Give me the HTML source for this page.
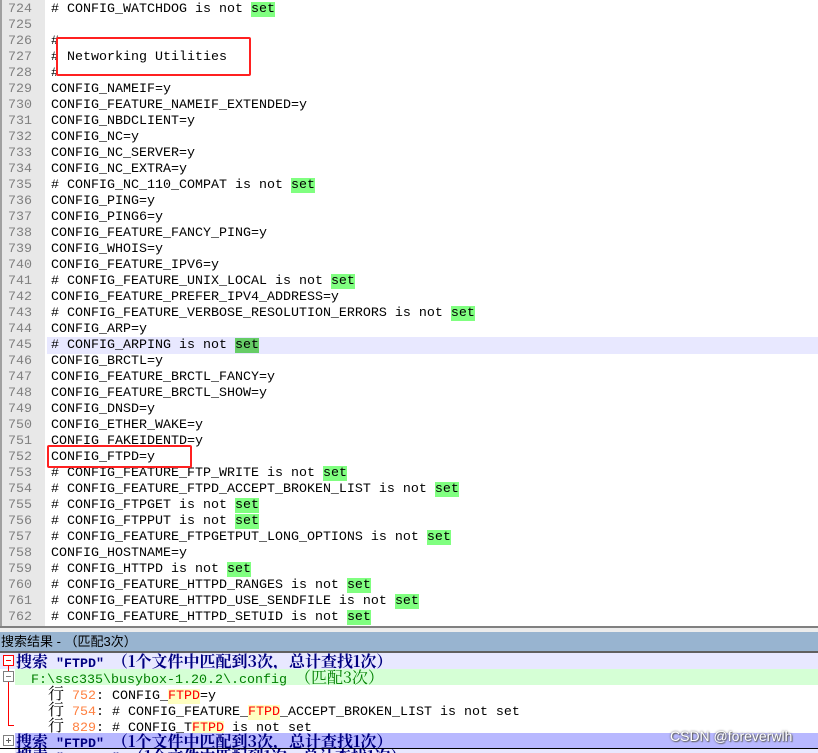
<!DOCTYPE html>
<html><head><meta charset="utf-8"><style>
body{margin:0;width:818px;height:753px;overflow:hidden;background:#fff;position:relative;font-family:"Liberation Mono","Noto Sans CJK SC",monospace;font-size:13.33px;}
.ed{position:absolute;left:0;top:0;width:818px;height:626px;overflow:hidden;}
.gut{position:absolute;left:0;top:0;width:45px;height:626px;background:#e8e8e8;border-left:2px solid #a0a0a0;box-sizing:border-box;}
.r{position:absolute;left:0;width:818px;height:16px;line-height:16px;white-space:pre;}
.n{position:absolute;left:8px;color:#808080;}
.c{position:absolute;left:51px;color:#000;}
.hl{background:#e8e8ff;}
.s{background:#80ff80;}
.hl .s{background:#66cc66;}
.box{position:absolute;border:2px solid #ff2020;box-sizing:border-box;border-radius:2px;}
.p{position:absolute;left:0;width:818px;height:16px;line-height:16px;white-space:pre;}
.b{font-weight:bold;color:#000080;}
.k{font-family:"Noto Serif CJK SC","Noto Sans CJK SC",serif;font-size:16px;}
</style></head><body>
<div class="ed">
<div class="gut"></div>
<div class="r" style="top:2px"><span class="n">724</span><span class="c"># CONFIG_WATCHDOG is not <span class="s">set</span></span></div>
<div class="r" style="top:18px"><span class="n">725</span><span class="c"></span></div>
<div class="r" style="top:34px"><span class="n">726</span><span class="c">#</span></div>
<div class="r" style="top:50px"><span class="n">727</span><span class="c"># Networking Utilities</span></div>
<div class="r" style="top:66px"><span class="n">728</span><span class="c">#</span></div>
<div class="r" style="top:82px"><span class="n">729</span><span class="c">CONFIG_NAMEIF=y</span></div>
<div class="r" style="top:98px"><span class="n">730</span><span class="c">CONFIG_FEATURE_NAMEIF_EXTENDED=y</span></div>
<div class="r" style="top:114px"><span class="n">731</span><span class="c">CONFIG_NBDCLIENT=y</span></div>
<div class="r" style="top:130px"><span class="n">732</span><span class="c">CONFIG_NC=y</span></div>
<div class="r" style="top:146px"><span class="n">733</span><span class="c">CONFIG_NC_SERVER=y</span></div>
<div class="r" style="top:162px"><span class="n">734</span><span class="c">CONFIG_NC_EXTRA=y</span></div>
<div class="r" style="top:178px"><span class="n">735</span><span class="c"># CONFIG_NC_110_COMPAT is not <span class="s">set</span></span></div>
<div class="r" style="top:194px"><span class="n">736</span><span class="c">CONFIG_PING=y</span></div>
<div class="r" style="top:210px"><span class="n">737</span><span class="c">CONFIG_PING6=y</span></div>
<div class="r" style="top:226px"><span class="n">738</span><span class="c">CONFIG_FEATURE_FANCY_PING=y</span></div>
<div class="r" style="top:242px"><span class="n">739</span><span class="c">CONFIG_WHOIS=y</span></div>
<div class="r" style="top:258px"><span class="n">740</span><span class="c">CONFIG_FEATURE_IPV6=y</span></div>
<div class="r" style="top:274px"><span class="n">741</span><span class="c"># CONFIG_FEATURE_UNIX_LOCAL is not <span class="s">set</span></span></div>
<div class="r" style="top:290px"><span class="n">742</span><span class="c">CONFIG_FEATURE_PREFER_IPV4_ADDRESS=y</span></div>
<div class="r" style="top:306px"><span class="n">743</span><span class="c"># CONFIG_FEATURE_VERBOSE_RESOLUTION_ERRORS is not <span class="s">set</span></span></div>
<div class="r" style="top:322px"><span class="n">744</span><span class="c">CONFIG_ARP=y</span></div>
<div class="r hl" style="top:337px;left:47px;width:771px;height:17px;line-height:18px"><span class="n" style="left:-39px">745</span><span class="c" style="left:4px"># CONFIG_ARPING is not <span class="s">set</span></span></div>
<div class="r" style="top:354px"><span class="n">746</span><span class="c">CONFIG_BRCTL=y</span></div>
<div class="r" style="top:370px"><span class="n">747</span><span class="c">CONFIG_FEATURE_BRCTL_FANCY=y</span></div>
<div class="r" style="top:386px"><span class="n">748</span><span class="c">CONFIG_FEATURE_BRCTL_SHOW=y</span></div>
<div class="r" style="top:402px"><span class="n">749</span><span class="c">CONFIG_DNSD=y</span></div>
<div class="r" style="top:418px"><span class="n">750</span><span class="c">CONFIG_ETHER_WAKE=y</span></div>
<div class="r" style="top:434px"><span class="n">751</span><span class="c">CONFIG_FAKEIDENTD=y</span></div>
<div class="r" style="top:450px"><span class="n">752</span><span class="c">CONFIG_FTPD=y</span></div>
<div class="r" style="top:466px"><span class="n">753</span><span class="c"># CONFIG_FEATURE_FTP_WRITE is not <span class="s">set</span></span></div>
<div class="r" style="top:482px"><span class="n">754</span><span class="c"># CONFIG_FEATURE_FTPD_ACCEPT_BROKEN_LIST is not <span class="s">set</span></span></div>
<div class="r" style="top:498px"><span class="n">755</span><span class="c"># CONFIG_FTPGET is not <span class="s">set</span></span></div>
<div class="r" style="top:514px"><span class="n">756</span><span class="c"># CONFIG_FTPPUT is not <span class="s">set</span></span></div>
<div class="r" style="top:530px"><span class="n">757</span><span class="c"># CONFIG_FEATURE_FTPGETPUT_LONG_OPTIONS is not <span class="s">set</span></span></div>
<div class="r" style="top:546px"><span class="n">758</span><span class="c">CONFIG_HOSTNAME=y</span></div>
<div class="r" style="top:562px"><span class="n">759</span><span class="c"># CONFIG_HTTPD is not <span class="s">set</span></span></div>
<div class="r" style="top:578px"><span class="n">760</span><span class="c"># CONFIG_FEATURE_HTTPD_RANGES is not <span class="s">set</span></span></div>
<div class="r" style="top:594px"><span class="n">761</span><span class="c"># CONFIG_FEATURE_HTTPD_USE_SENDFILE is not <span class="s">set</span></span></div>
<div class="r" style="top:610px"><span class="n">762</span><span class="c"># CONFIG_FEATURE_HTTPD_SETUID is not <span class="s">set</span></span></div>
<div class="box" style="left:56px;top:37px;width:195px;height:39px;background:#fff"><span style="position:absolute;left:9px;top:11px;line-height:16px;white-space:pre">Networking Utilities</span></div>
<div class="box" style="left:47px;top:445px;width:145px;height:23px"></div>
</div>
<div style="position:absolute;left:0;top:626px;width:818px;height:2px;background:#808080"></div>
<div style="position:absolute;left:0;top:628px;width:818px;height:4px;background:#ececec"></div>
<div style="position:absolute;left:0;top:632px;width:818px;height:19px;background:#98b4d0;line-height:19px;font-family:'Liberation Sans','Noto Sans CJK SC',sans-serif;font-size:13px;white-space:pre;padding-left:1px">搜索结果 - （匹配3次）</div>
<div style="position:absolute;left:0;top:651px;width:818px;height:2px;background:#606060"></div>
<div class="p" style="top:653px;background:#e8e8ff"><span class="b" style="position:absolute;left:16px"><span class="k">搜索</span> "FTPD" <span class="k">（1个文件中匹配到3次，总计查找1次）</span></span></div>
<div class="p" style="top:669px;background:#d5ffd5;left:15px;width:803px"><span style="position:absolute;left:16px;color:#008000">F:\ssc335\busybox-1.20.2\.config <span class="k">（匹配3次）</span></span></div>
<div class="p" style="top:685px"><span style="position:absolute;left:48px"><span class="k">行</span> <span style="color:#ff8040">752</span>: CONFIG_<span style="color:#ff0000;background:#ffffc0">FTPD</span>=y</span></div>
<div class="p" style="top:701px"><span style="position:absolute;left:48px"><span class="k">行</span> <span style="color:#ff8040">754</span>: # CONFIG_FEATURE_<span style="color:#ff0000;background:#ffffc0">FTPD</span>_ACCEPT_BROKEN_LIST is not set</span></div>
<div class="p" style="top:717px"><span style="position:absolute;left:48px"><span class="k">行</span> <span style="color:#ff8040">829</span>: # CONFIG_T<span style="color:#ff0000;background:#ffffc0">FTPD</span> is not set</span></div>
<div class="p" style="top:733px;background:#b8b8ff;left:15px;width:803px"><span class="b" style="position:absolute;left:1px"><span class="k">搜索</span> "FTPD" <span class="k">（1个文件中匹配到3次，总计查找1次）</span></span></div>
<div style="position:absolute;left:0;top:748px;width:818px;height:1px;background:#000"></div>
<div class="p" style="top:749px;background:#e8e8ff;left:15px;width:803px;overflow:hidden;height:4px"><span class="b" style="position:absolute;left:1px;top:-1px"><span class="k">搜索</span> "......" <span class="k">（1个文件中匹配到1次，总计查找1次）</span></span></div>
<div style="position:absolute;left:3px;top:655px;width:9px;height:9px;border:1px solid #ff0000;background:#fff"><div style="position:absolute;left:2px;top:4px;width:5px;height:1px;background:#ff0000"></div></div>
<div style="position:absolute;left:8px;top:666px;width:1px;height:60px;background:#ff0000"></div>
<div style="position:absolute;left:8px;top:725px;width:6px;height:1px;background:#ff0000"></div>
<div style="position:absolute;left:3px;top:671px;width:9px;height:9px;border:1px solid #808080;background:#fff"><div style="position:absolute;left:2px;top:4px;width:5px;height:1px;background:#808080"></div></div>
<div style="position:absolute;left:3px;top:735px;width:9px;height:9px;border:1px solid #808080;background:#fff"><div style="position:absolute;left:2px;top:4px;width:5px;height:1px;background:#606060"></div><div style="position:absolute;left:4px;top:2px;width:1px;height:5px;background:#606060"></div></div>
<div style="position:absolute;left:670px;top:728px;font-family:'Liberation Sans',sans-serif;font-size:14px;color:#fff;text-shadow:0 0 2px #555,1px 1px 1px #666">CSDN @foreverwlh</div>
</body></html>
